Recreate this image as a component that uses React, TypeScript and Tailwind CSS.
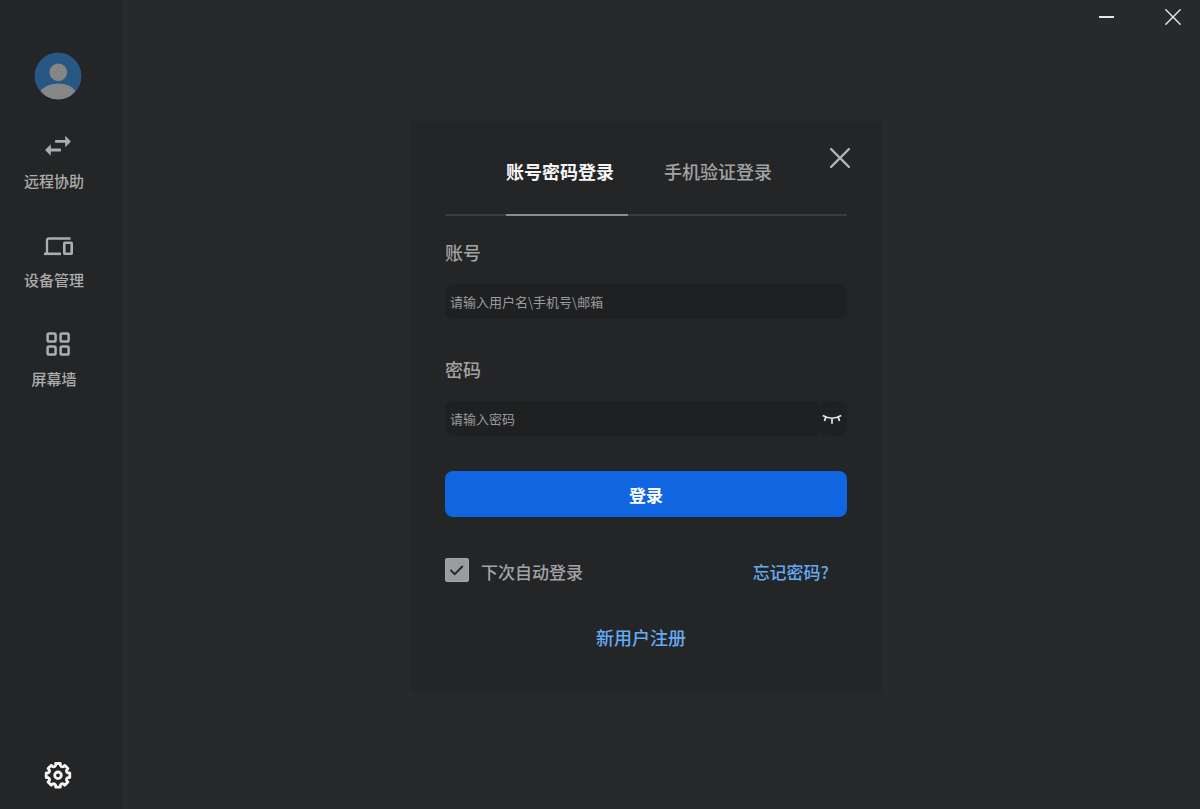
import { useState } from 'react';
import type { ReactNode } from 'react';

type LoginMode = 'password' | 'phone';

interface NavItemProps {
  label: string;
  icon: ReactNode;
}

function SwapIcon() {
  return (
    <svg className="h-9 w-9 shrink-0" viewBox="0 0 25 25" fill="currentColor" aria-hidden>
      <path d="M7.490 11.300L3.500 15.300l3.990 4v-3H14.500v-2H7.490v-3zM21.500 9.300l-3.990-4v3H10.500v2h7.010v3L21.500 9.300z" />
    </svg>
  );
}

function DevicesIcon() {
  return (
    <svg className="h-8 w-8" viewBox="0 0 32 32" fill="none" stroke="currentColor" aria-hidden>
      <path d="M28.500 9.500H7q-2 0-2 2v13" strokeWidth={2.3} />
      <path d="M2 24.800h17" strokeWidth={2.600} />
      <rect x="22.300" y="13.800" width="7.400" height="11" rx="0.600" strokeWidth={2.600} />
    </svg>
  );
}

function WallIcon() {
  return (
    <svg className="h-8 w-8" viewBox="0 0 32 32" fill="none" stroke="currentColor" strokeWidth={2.5} aria-hidden>
      <rect x="5.6" y="5.6" width="8" height="8" rx="1.6" />
      <rect x="18.6" y="5.6" width="8" height="8" rx="1.6" />
      <rect x="5.6" y="18.6" width="8" height="8" rx="1.6" />
      <rect x="18.6" y="18.6" width="8" height="8" rx="1.6" />
    </svg>
  );
}

// eight stubby teeth with rounded valleys between them
function gearPath(cx: number, cy: number, outer: number, inner: number) {
  const at = (deg: number, r: number) => {
    const a = (deg * Math.PI) / 180;
    return `${(cx + r * Math.sin(a)).toFixed(2)} ${(cy - r * Math.cos(a)).toFixed(2)}`;
  };
  let d = `M${at(-11, outer)}`;
  for (let i = 0; i < 8; i++) {
    const mid = i * 45;
    d += `L${at(mid + 11, outer)}L${at(mid + 14, inner)}Q${at(mid + 22.5, inner - 1.2)} ${at(mid + 31, inner)}L${at(mid + 34, outer)}`;
  }
  return `${d}Z`;
}

function GearIcon() {
  return (
    <svg
      className="h-8 w-8"
      viewBox="0 0 32 32"
      fill="none"
      stroke="currentColor"
      strokeWidth={2.8}
      strokeLinejoin="round"
      aria-hidden
    >
      <path d={gearPath(16, 16.3, 12, 10)} />
      <circle cx="16" cy="16.300" r="3.300" />
    </svg>
  );
}

function Avatar() {
  return (
    <svg className="h-12 w-12 rounded-full" viewBox="0 0 48 48" role="img" aria-label="头像">
      <circle cx="24" cy="24" r="23.500" fill="#285784" />
      <circle cx="24.300" cy="20.300" r="8.800" fill="#868686" />
      <path d="M6.500 39q6-7.500 17.800-7.500t17.200 7.500Q35 47.500 24 47.500T6.500 39z" fill="#868686" />
    </svg>
  );
}

function ClosedEyeIcon() {
  return (
    <svg
      className="h-[10px] w-5 shrink-0"
      viewBox="0 0 20 10"
      fill="none"
      stroke="currentColor"
      strokeWidth={1.7}
      aria-hidden
    >
      <path d="M0.800 1.500Q10 7 19.200 1.500M10 4.800v5M3.600 3.300L2.600 7M16.400 3.300l1 3.700" />
    </svg>
  );
}

function CrossIcon({ className, strokeWidth }: { className: string; strokeWidth: number }) {
  return (
    <svg className={className} viewBox="0 0 20 20" fill="none" stroke="currentColor" strokeWidth={strokeWidth} aria-hidden>
      <path strokeLinecap="round" d="M1 1l18 18M19 1L1 19" />
    </svg>
  );
}

function NavItem({ label, icon }: NavItemProps) {
  return (
    <li>
      <button type="button" className="flex flex-col items-center gap-2">
        <span className="flex h-8 items-center justify-center">{icon}</span>
        <span className="pr-2 text-[15px] leading-[22px] font-medium">{label}</span>
      </button>
    </li>
  );
}

function Sidebar() {
  return (
    <aside className="flex w-[123px] shrink-0 flex-col items-center bg-[#242527] pt-[52px] pr-[7px] pb-[18px] text-[#acadae]">
      <Avatar />
      <nav className="mt-[30px]">
        <ul className="flex flex-col items-center gap-[37px]">
          <NavItem label="远程协助" icon={<SwapIcon />} />
          <NavItem label="设备管理" icon={<DevicesIcon />} />
          <NavItem label="屏幕墙" icon={<WallIcon />} />
        </ul>
      </nav>
      <button type="button" className="mt-auto text-[#f4f4f4]" aria-label="设置">
        <GearIcon />
      </button>
    </aside>
  );
}

function TitleBar() {
  return (
    <header className="flex h-[34px] justify-end gap-[13px] text-[#e6e6e6]">
      <button type="button" className="flex w-[54px] items-center justify-center" aria-label="最小化">
        <span className="h-[2px] w-[15px] bg-current" />
      </button>
      <button type="button" className="flex w-[54px] items-center justify-center" aria-label="关闭窗口">
        <CrossIcon className="h-4 w-4" strokeWidth={1.8} />
      </button>
    </header>
  );
}

function LoginDialog() {
  const [mode, setMode] = useState<LoginMode>('password');
  const [showPassword, setShowPassword] = useState(false);

  const tabs: { id: LoginMode; label: string }[] = [
    { id: 'password', label: '账号密码登录' },
    { id: 'phone', label: '手机验证登录' },
  ];

  return (
    <section
      role="dialog"
      aria-label="登录"
      className="relative w-full max-w-[472px] bg-[#242527] px-[35px] pt-9 pb-[41px] text-[#a2a3a4]"
    >
      <button type="button" className="absolute top-[27px] right-8 text-[#b4b5b6]" aria-label="关闭">
        <CrossIcon className="h-5 w-5" strokeWidth={2.4} />
      </button>

      <div role="tablist" className="flex gap-9 border-b-2 border-[#3a3b3d] pl-[61px]">
        {tabs.map((tab) => (
          <button
            key={tab.id}
            type="button"
            role="tab"
            aria-selected={mode === tab.id}
            onClick={() => setMode(tab.id)}
            className={
              mode === tab.id
                ? '-mb-[2px] w-[122px] border-b-2 border-[#8c8d8e] pb-[29px] text-left text-lg font-bold text-[#f6f6f6]'
                : '-mb-[2px] w-[122px] border-b-2 border-transparent pb-[29px] text-left text-lg font-medium'
            }
          >
            {tab.label}
          </button>
        ))}
      </div>

      <form className="flex flex-col pt-[22px]" onSubmit={(e) => e.preventDefault()}>
        <label htmlFor="account" className="text-lg font-medium">
          账号
        </label>
        <input
          id="account"
          type="text"
          placeholder="请输入用户名\手机号\邮箱"
          className="mt-[18px] h-[35px] w-full rounded-lg bg-[#1f2022] px-[5px] text-[13px] placeholder:text-[#9a9b9c] focus:outline-none"
        />

        <label htmlFor="password" className="mt-9 text-lg font-medium">
          密码
        </label>
        <div className="mt-[18px] flex h-[35px]">
          <input
            id="password"
            type={showPassword ? 'text' : 'password'}
            placeholder="请输入密码"
            className="min-w-0 flex-1 rounded-lg bg-[#1f2022] px-[5px] text-[13px] placeholder:text-[#9a9b9c] focus:outline-none"
          />
          <button
            type="button"
            onClick={() => setShowPassword(!showPassword)}
            className="flex w-[26px] items-center justify-center rounded-lg bg-[#1f2022] pr-1 text-[#e4e4e4]"
            aria-label="显示密码"
          >
            <ClosedEyeIcon />
          </button>
        </div>

        <button
          type="submit"
          className="mt-[35px] h-[46px] rounded-lg bg-[#1066e0] pt-[2px] text-[17px] font-bold text-white"
        >
          登录
        </button>

        <div className="mt-[41px] flex items-start justify-between pr-[18px] text-[17px] leading-7 font-medium">
          <label className="flex items-start gap-3">
            <span className="grid h-6 w-6">
              <input
                type="checkbox"
                defaultChecked
                className="peer col-start-1 row-start-1 h-6 w-6 appearance-none rounded-[2px] border border-[#a4a5a6] checked:bg-[#9a9b9c]"
              />
              <svg
                className="pointer-events-none invisible col-start-1 row-start-1 h-6 w-6 text-[#242527] peer-checked:visible"
                viewBox="0 0 24 24"
                fill="none"
                stroke="currentColor"
                strokeWidth={1.8}
                aria-hidden
              >
                <path d="M5.500 12l4.200 4.200L17.800 8" />
              </svg>
            </span>
            下次自动登录
          </label>
          <a href="#forgot" className="text-[#64abf4]">
            忘记密码?
          </a>
        </div>

        <a href="#register" className="mt-[37px] mr-[10px] self-center text-lg font-medium text-[#64abf4]">
          新用户注册
        </a>
      </form>
    </section>
  );
}

export default function App() {
  return (
    <div className="flex min-h-screen bg-[#28292b] font-['Noto_Sans_CJK_SC',sans-serif]">
      <Sidebar />
      <div className="flex min-w-0 flex-1 flex-col">
        <TitleBar />
        <main className="flex flex-1 items-start justify-center pt-[87px] pr-[31px] pb-8">
          <LoginDialog />
        </main>
      </div>
    </div>
  );
}
